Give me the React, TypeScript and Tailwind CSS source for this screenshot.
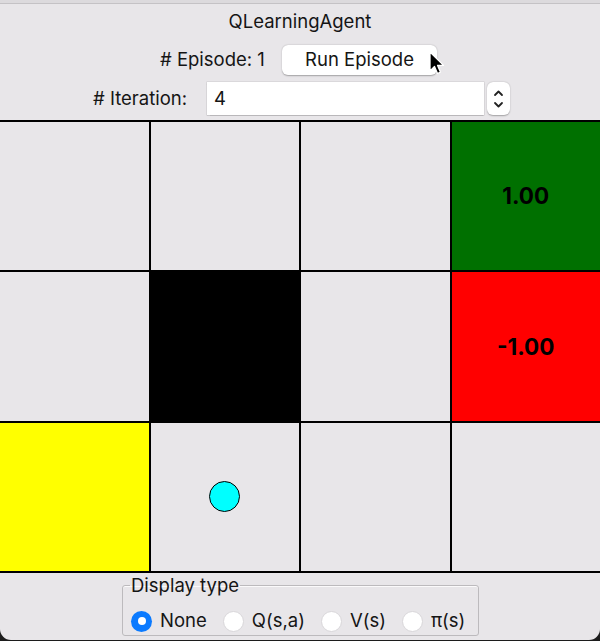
import React, { useState } from 'react';

const cells: { bg: string; label?: string; agent?: boolean }[] = [
  { bg: 'bg-[#e8e6e9]' },
  { bg: 'bg-[#e8e6e9]' },
  { bg: 'bg-[#e8e6e9]' },
  { bg: 'bg-[#007000]', label: '1.00' },
  { bg: 'bg-[#e8e6e9]' },
  { bg: 'bg-black' },
  { bg: 'bg-[#e8e6e9]' },
  { bg: 'bg-[#ff0000]', label: '-1.00' },
  { bg: 'bg-[#ffff00]' },
  { bg: 'bg-[#e8e6e9]', agent: true },
  { bg: 'bg-[#e8e6e9]' },
  { bg: 'bg-[#e8e6e9]' },
];

const options = ['None', 'Q(s,a)', 'V(s)', 'π(s)'];

function Radio({ checked }: { checked: boolean }) {
  if (checked) {
    return (
      <span className="w-[21px] h-[21px] rounded-full bg-[#0a7aff] flex items-center justify-center shrink-0">
        <span className="w-[8px] h-[8px] rounded-full bg-white" />
      </span>
    );
  }
  return <span className="w-[21px] h-[21px] rounded-full bg-white border border-[#d8d6d9] shrink-0" />;
}

export default function App() {
  const [display, setDisplay] = useState('None');

  return (
    <div className="w-[600px] h-[641px] bg-[#1c1c1c] overflow-hidden font-['Inter','Liberation_Sans',sans-serif] text-[#151515] text-[18.5px]">
      <div className="w-full h-[640px] bg-[#e8e6e9] rounded-b-[11px] flex flex-col overflow-hidden">
        {/* header */}
        <div className="h-[4px] bg-[#dcdadd] border-b border-[#c4c2c5]" />
        <div className="flex justify-center items-center h-[36px]">QLearningAgent</div>
        <div className="flex items-center h-[40px]">
          <span className="ml-[160px] w-[122px]"># Episode: 1</span>
          <div className="relative">
            <button className="w-[155px] h-[30px] bg-white rounded-[6px] shadow-[0_0.5px_1.5px_rgba(0,0,0,0.3)]">
              Run Episode
            </button>
            <svg className="absolute left-[146px] top-[6px]" width="18" height="26" viewBox="0 0 18 26">
              <path d="M2 1 L2 20 L6.5 15.5 L9.5 22.5 L12.5 21.2 L9.6 14.4 L15.5 14.4 Z" fill="black" stroke="white" strokeWidth="1.3" strokeLinejoin="round" />
            </svg>
          </div>
        </div>
        <div className="flex items-center h-[40px] pb-[3px]">
          <span className="ml-[93px] w-[114px]"># Iteration:</span>
          <div className="w-[277px] h-[33px] bg-white shadow-[0_0_0_0.5px_rgba(0,0,0,0.12),0_0.5px_1px_rgba(0,0,0,0.15)] flex items-center px-[7px]">
            4
          </div>
          <div className="ml-[3px] w-[23px] h-[33px] bg-white rounded-[6px] shadow-[0_0.5px_1.5px_rgba(0,0,0,0.3)] flex flex-col items-center justify-center gap-[4px]">
            <svg width="11" height="8" viewBox="0 0 11 8"><path d="M2 6 L5.5 2.5 L9 6" fill="none" stroke="#222" strokeWidth="1.8" strokeLinecap="round" strokeLinejoin="round" /></svg>
            <svg width="11" height="8" viewBox="0 0 11 8"><path d="M2 2 L5.5 5.5 L9 2" fill="none" stroke="#222" strokeWidth="1.8" strokeLinecap="round" strokeLinejoin="round" /></svg>
          </div>
        </div>

        {/* grid world */}
        <div className="grid grid-cols-4 grid-rows-3 gap-[2px] bg-black border-y-2 border-black h-[453px] shrink-0">
          {cells.map((c, i) => (
            <div key={i} className={`${c.bg} flex items-center justify-center`}>
              {c.label && <span className="text-[22.5px] font-bold text-black">{c.label}</span>}
              {c.agent && <span className="w-[31px] h-[31px] rounded-full bg-[#00ffff] border-[1.5px] border-black" />}
            </div>
          ))}
        </div>

        {/* display type */}
        <div className="flex pl-[122px] pt-[2px]">
          <fieldset className="w-[357px] min-w-0 border border-[#bcbabd] shadow-[inset_0_1px_0_rgba(255,255,255,0.8)] rounded-[3px] px-[8px] pb-[3px] overflow-hidden">
            <legend className="px-[1px] ml-[-1px] leading-[20px]">Display type</legend>
            <div className="flex items-center mt-[15px] h-[22px] whitespace-nowrap">
              {options.map(o => (
                <button key={o} onClick={() => setDisplay(o)} className="flex items-center gap-[8px] mr-[16px] shrink-0">
                  <Radio checked={display === o} />
                  <span>{o}</span>
                </button>
              ))}
            </div>
          </fieldset>
        </div>
      </div>
    </div>
  );
}
